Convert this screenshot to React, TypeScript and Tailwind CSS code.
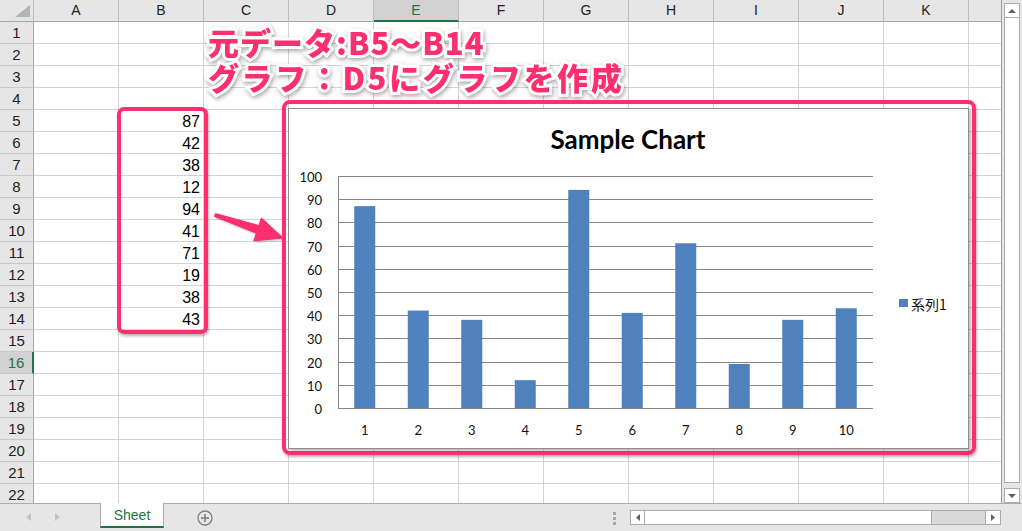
import React from 'react'

const cols = ['A', 'B', 'C', 'D', 'E', 'F', 'G', 'H', 'I', 'J', 'K']
const rows = Array.from({ length: 22 }, (_, i) => i + 1)
const cellData: Record<number, number> = { 5: 87, 6: 42, 7: 38, 8: 12, 9: 94, 10: 41, 11: 71, 12: 19, 13: 38, 14: 43 }
const series = [87, 42, 38, 12, 94, 41, 71, 19, 38, 43]

function HeaderRow() {
	return (
		<div className="flex h-[22px] shrink-0 bg-[#e6e6e6] text-[14px] text-[#222]">
			<div className="w-[34px] h-full border-r border-b border-r-[#bdbdbd] border-b-[#a6a6a6] flex items-end justify-end pr-[3px] pb-[4px]">
				<svg width="15" height="12" viewBox="0 0 15 12">
					<polygon points="15,0 15,12 0,12" fill="#b4b4b4" />
				</svg>
			</div>
			{cols.map((c) =>
				c === 'E' ? (
					<div key={c} className="w-[85px] h-full border-r border-r-[#bdbdbd] border-b-2 border-b-[#217346] bg-[#d2d2d2] text-[#217346] flex items-center justify-center pt-[1px]">
						{c}
					</div>
				) : (
					<div key={c} className="w-[85px] h-full border-r border-r-[#bdbdbd] border-b border-b-[#a6a6a6] flex items-center justify-center">
						{c}
					</div>
				)
			)}
			<div className="flex-1 h-full border-b border-b-[#a6a6a6]" />
		</div>
	)
}

function SheetRow({ n }: { n: number }) {
	const active = n === 16
	return (
		<div className="flex h-[22px] shrink-0">
			<div
				className={
					active
						? 'w-[34px] h-full border-r-2 border-r-[#217346] border-b border-b-[#c8c8c8] bg-[#d2d2d2] text-[#217346] text-[15px] flex items-center justify-center pt-[1px]'
						: 'w-[34px] h-full border-r border-r-[#a6a6a6] border-b border-b-[#c8c8c8] bg-[#e6e6e6] text-[#222] text-[15px] flex items-center justify-center pt-[1px]'
				}>
				{n}
			</div>
			{cols.map((c) => (
				<div key={c} className="w-[85px] h-full border-r border-b border-[#d4d4d4] flex items-center justify-end pr-[3px] pt-[3px] text-[16px] text-black">
					{c === 'B' && cellData[n] !== undefined ? cellData[n] : ''}
				</div>
			))}
			<div className="flex-1 h-full border-b border-[#d4d4d4]" />
		</div>
	)
}

function Chart() {
	const left = 338
	const right = 873
	const top = 176
	const bottom = 408
	const step = (bottom - top) / 100
	const cat = (right - left) / 10
	const ticks = [0, 10, 20, 30, 40, 50, 60, 70, 80, 90, 100]
	return (
		<svg viewBox="289 109 679 339" width="679" height="339" className="block" fontFamily="Lato, 'Noto Sans', sans-serif">
			<text x={628} y={139} textAnchor="middle" dominantBaseline="central" fontWeight={700} fontSize={26} fill="#000">
				Sample Chart
			</text>
			{ticks.map((v) => {
				const y = Math.round(bottom - v * step) + 0.5
				return (
					<g key={v}>
						<line x1={left} x2={right} y1={y} y2={y} stroke="#878787" strokeWidth={1} />
						<text x={322} y={y} textAnchor="end" dominantBaseline="central" fontSize={13} fill="#111">
							{v}
						</text>
					</g>
				)
			})}
			<line x1={left + 0.5} x2={left + 0.5} y1={top} y2={bottom + 1} stroke="#878787" strokeWidth={1} />
			{series.map((v, i) => {
				const cx = left + cat * i + cat / 2
				const h = v * step
				return (
					<g key={i}>
						<rect x={cx - 10.5} y={bottom - h} width={21} height={h} fill="#4f81bd" />
						<text x={cx} y={430} textAnchor="middle" dominantBaseline="central" fontSize={13} fill="#111">
							{i + 1}
						</text>
					</g>
				)
			})}
			<rect x={899} y={299} width={9} height={8} fill="#4f81bd" />
			<text x={911} y={303.5} dominantBaseline="central" fontSize={14} fontFamily="'Noto Sans CJK JP', sans-serif" fill="#111">
				系列1
			</text>
		</svg>
	)
}

function Arrow() {
	return (
		<svg viewBox="210 205 80 45" width="80" height="45" className="drop-shadow-[1px_1px_1px_rgba(0,0,0,0.3)]">
			<polygon
				points="215.5,213.6 258.9,225.6 261.4,218 283,238 253.8,240.8 256.3,233.2 214.5,216.4"
				fill="#ff2e6e"
				stroke="#ff2e6e"
				strokeWidth={1}
				strokeLinejoin="round"
			/>
		</svg>
	)
}

function TabBar() {
	return (
		<div className="h-[28px] shrink-0 flex items-start border-t border-[#ababab] bg-[#e6e6e6]">
			<div className="w-[100px] h-full flex items-center pl-[26px] gap-[24px] pb-[2px]">
				<svg width="5" height="8" viewBox="0 0 5 8">
					<polygon points="5,0 5,8 0,4" fill="#c3c3c3" />
				</svg>
				<svg width="5" height="8" viewBox="0 0 5 8">
					<polygon points="0,0 0,8 5,4" fill="#c3c3c3" />
				</svg>
			</div>
			<div className="-mt-px w-[64px] h-[25px] bg-white border-x border-[#ababab] border-b-2 border-b-[#217346] flex items-center justify-center pt-[2px] text-[14px] text-[#217346]">
				Sheet
			</div>
			<div className="w-[82px] h-full flex items-center justify-center">
				<svg width="16" height="16" viewBox="0 0 16 16">
					<circle cx="8" cy="8" r="7" fill="none" stroke="#808080" strokeWidth="1.3" />
					<line x1="4" x2="12" y1="8" y2="8" stroke="#808080" strokeWidth="1.6" />
					<line x1="8" x2="8" y1="4" y2="12" stroke="#808080" strokeWidth="1.6" />
				</svg>
			</div>
			<div className="flex-1" />
			<div className="w-[3px] mr-[14px] mt-[8px] flex flex-col gap-[2px]">
				<div className="h-[3px] bg-[#a8a8a8]" />
				<div className="h-[3px] bg-[#a8a8a8]" />
				<div className="h-[3px] bg-[#a8a8a8]" />
			</div>
			<div className="mt-[6px] w-[371px] h-[15px] flex border border-[#ababab] bg-[#dadada]">
				<div className="w-[14px] h-full bg-white border-r border-[#ababab] flex items-center justify-center">
					<svg width="4" height="7" viewBox="0 0 4 7">
						<polygon points="4,0 4,7 0,3.5" fill="#606060" />
					</svg>
				</div>
				<div className="w-[287px] h-full bg-white border-r border-[#ababab]" />
				<div className="flex-1" />
				<div className="w-[15px] h-full bg-white border-l border-[#ababab] flex items-center justify-center">
					<svg width="4" height="7" viewBox="0 0 4 7">
						<polygon points="0,0 0,7 4,3.5" fill="#606060" />
					</svg>
				</div>
			</div>
			<div className="w-[21px]" />
		</div>
	)
}

export default function App() {
	return (
		<div className="relative w-[1022px] h-[531px] overflow-hidden flex flex-col bg-[#e6e6e6] font-['Liberation_Sans','Noto_Sans_CJK_JP',sans-serif]">
			<div className="flex h-[503px] shrink-0">
				<div className="w-[1002px] h-full overflow-hidden flex flex-col bg-white border-r border-[#9b9b9b]">
					<HeaderRow />
					{rows.map((n) => (
						<SheetRow key={n} n={n} />
					))}
				</div>
				<div className="flex-1 flex flex-col pl-[2px] pr-[2px] pt-[3px]">
					<div className="h-[15px] shrink-0 bg-white border border-[#ababab] flex items-center justify-center">
						<svg width="8" height="4" viewBox="0 0 8 4">
							<polygon points="0,4 8,4 4,0" fill="#606060" />
						</svg>
					</div>
					<div className="flex-1 bg-white border-x border-b border-[#ababab]" />
					<div className="h-[5px] shrink-0" />
					<div className="h-[15px] shrink-0 bg-white border border-[#ababab] flex items-center justify-center">
						<svg width="8" height="4" viewBox="0 0 8 4">
							<polygon points="0,0 8,0 4,4" fill="#606060" />
						</svg>
					</div>
				</div>
			</div>
			<TabBar />

			{/* callout text */}
			<div className="absolute left-[208px] top-[24px] font-['Noto_Sans_CJK_JP',sans-serif] font-black text-[31px] leading-[35px] text-[#ff2e6e] [-webkit-text-stroke:6px_#ffffff] [paint-order:stroke_fill] drop-shadow-[1px_2px_2px_rgba(0,0,0,0.35)]">
				<div className="tracking-[1px]">元データ:B5～B14</div>
				<div className="tracking-[2.6px]">グラフ：D5にグラフを作成</div>
			</div>

			{/* source range highlight */}
			<div className="absolute left-[117px] top-[107px] w-[91px] h-[227px] border-4 border-[#ff2e6e] rounded-[7px] shadow-[1px_2px_3px_rgba(0,0,0,0.3)]" />

			<div className="absolute left-[210px] top-[205px]">
				<Arrow />
			</div>

			{/* chart with highlight frame */}
			<div className="absolute left-[282px] top-[100px] border-4 border-[#ff2e6e] rounded-[8px] pl-[2px] pt-[4px] pr-[3px] pb-[2px] shadow-[1px_2px_3px_rgba(0,0,0,0.3)]">
				<div className="border border-[#8e8e8e] bg-white shadow-[2px_2px_2px_rgba(0,0,0,0.25)]">
					<Chart />
				</div>
			</div>
		</div>
	)
}
